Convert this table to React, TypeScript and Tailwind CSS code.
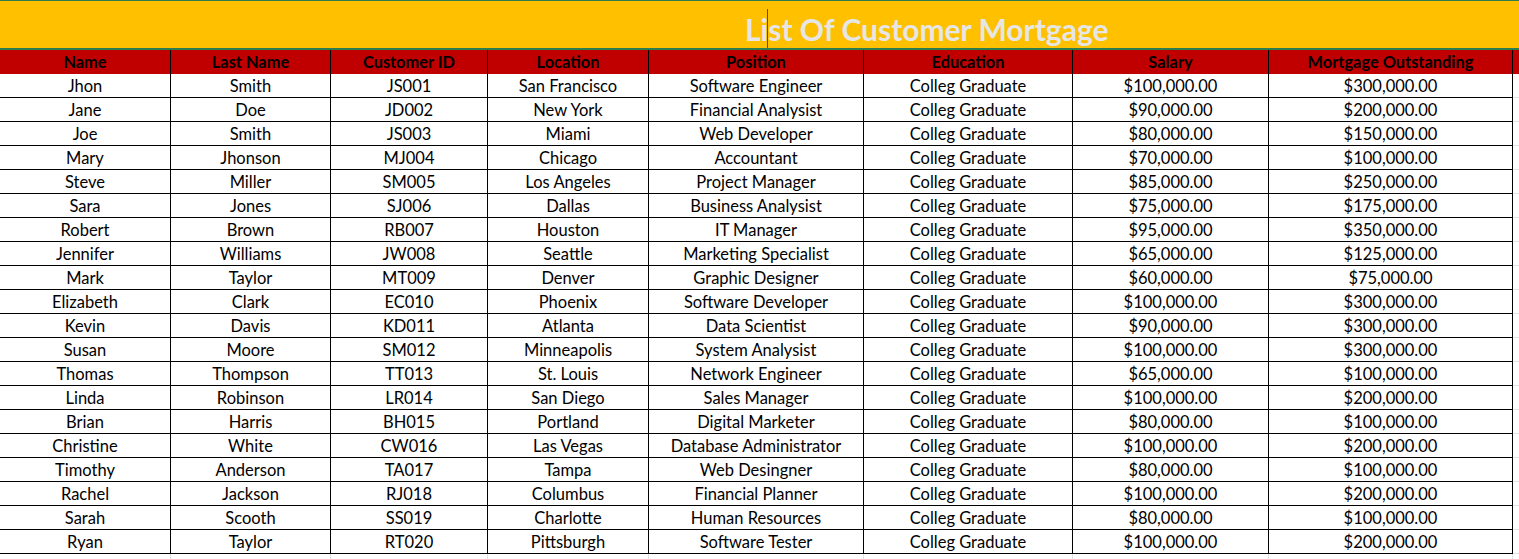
const columns = [
  { label: 'Name', w: 'w-[171px]' },
  { label: 'Last Name', w: 'w-[160px]' },
  { label: 'Customer ID', w: 'w-[157px]' },
  { label: 'Location', w: 'w-[161px]' },
  { label: 'Position', w: 'w-[215px]' },
  { label: 'Education', w: 'w-[209px]' },
  { label: 'Salary', w: 'w-[196px]' },
  { label: 'Mortgage Outstanding', w: 'w-[244px]' },
]

const rows = [
  ['Jhon', 'Smith', 'JS001', 'San Francisco', 'Software Engineer', '$100,000.00', '$300,000.00'],
  ['Jane', 'Doe', 'JD002', 'New York', 'Financial Analysist', '$90,000.00', '$200,000.00'],
  ['Joe', 'Smith', 'JS003', 'Miami', 'Web Developer', '$80,000.00', '$150,000.00'],
  ['Mary', 'Jhonson', 'MJ004', 'Chicago', 'Accountant', '$70,000.00', '$100,000.00'],
  ['Steve', 'Miller', 'SM005', 'Los Angeles', 'Project Manager', '$85,000.00', '$250,000.00'],
  ['Sara', 'Jones', 'SJ006', 'Dallas', 'Business Analysist', '$75,000.00', '$175,000.00'],
  ['Robert', 'Brown', 'RB007', 'Houston', 'IT Manager', '$95,000.00', '$350,000.00'],
  ['Jennifer', 'Williams', 'JW008', 'Seattle', 'Marketing Specialist', '$65,000.00', '$125,000.00'],
  ['Mark', 'Taylor', 'MT009', 'Denver', 'Graphic Designer', '$60,000.00', '$75,000.00'],
  ['Elizabeth', 'Clark', 'EC010', 'Phoenix', 'Software Developer', '$100,000.00', '$300,000.00'],
  ['Kevin', 'Davis', 'KD011', 'Atlanta', 'Data Scientist', '$90,000.00', '$300,000.00'],
  ['Susan', 'Moore', 'SM012', 'Minneapolis', 'System Analysist', '$100,000.00', '$300,000.00'],
  ['Thomas', 'Thompson', 'TT013', 'St. Louis', 'Network Engineer', '$65,000.00', '$100,000.00'],
  ['Linda', 'Robinson', 'LR014', 'San Diego', 'Sales Manager', '$100,000.00', '$200,000.00'],
  ['Brian', 'Harris', 'BH015', 'Portland', 'Digital Marketer', '$80,000.00', '$100,000.00'],
  ['Christine', 'White', 'CW016', 'Las Vegas', 'Database Administrator', '$100,000.00', '$200,000.00'],
  ['Timothy', 'Anderson', 'TA017', 'Tampa', 'Web Desingner', '$80,000.00', '$100,000.00'],
  ['Rachel', 'Jackson', 'RJ018', 'Columbus', 'Financial Planner', '$100,000.00', '$200,000.00'],
  ['Sarah', 'Scooth', 'SS019', 'Charlotte', 'Human Resources', '$80,000.00', '$100,000.00'],
  ['Ryan', 'Taylor', 'RT020', 'Pittsburgh', 'Software Tester', '$100,000.00', '$200,000.00'],
]

export default function App() {
  return (
    <div className="w-[1519px] h-[559px] overflow-hidden bg-white font-['Lato','Liberation_Sans',sans-serif] text-black">
      {/* title band */}
      <div className="relative h-[50px] bg-[#FFC000] border-t border-b-2 border-[#2E7D4E]">
        <div className="pl-[745px] pt-[10px] text-[30px] leading-[36px] font-bold text-[#E7E6E6]">
          List Of Customer Mortgage
        </div>
        <div className="absolute left-[767px] top-[8px] h-[39px] w-px bg-[#3048C8]" />
      </div>

      {/* header */}
      <div className="flex h-[24px] bg-[#C00000]">
        {columns.map((c) => (
          <div
            key={c.label}
            className={`${c.w} shrink-0 border-r border-black flex items-center justify-center pt-px text-[16.4px] font-bold`}
          >
            {c.label}
          </div>
        ))}
      </div>

      {/* body */}
      {rows.map((r) => {
        const cells = [r[0], r[1], r[2], r[3], r[4], 'Colleg Graduate', r[5], r[6]]
        return (
          <div key={r[2]} className="flex h-[24px]">
            {cells.map((v, i) => (
              <div
                key={i}
                className={`${columns[i].w} shrink-0 border-r border-b border-black flex items-center justify-center pt-px text-[16.5px]`}
              >
                {v}
              </div>
            ))}
            <div className="flex-1 border-b border-[#E1E1E1]" />
          </div>
        )
      })}

      {/* spare grid below */}
      <div className="flex h-[6px]">
        {columns.map((c) => (
          <div key={c.label} className={`${c.w} shrink-0 border-r border-[#E1E1E1]`} />
        ))}
      </div>
    </div>
  )
}
